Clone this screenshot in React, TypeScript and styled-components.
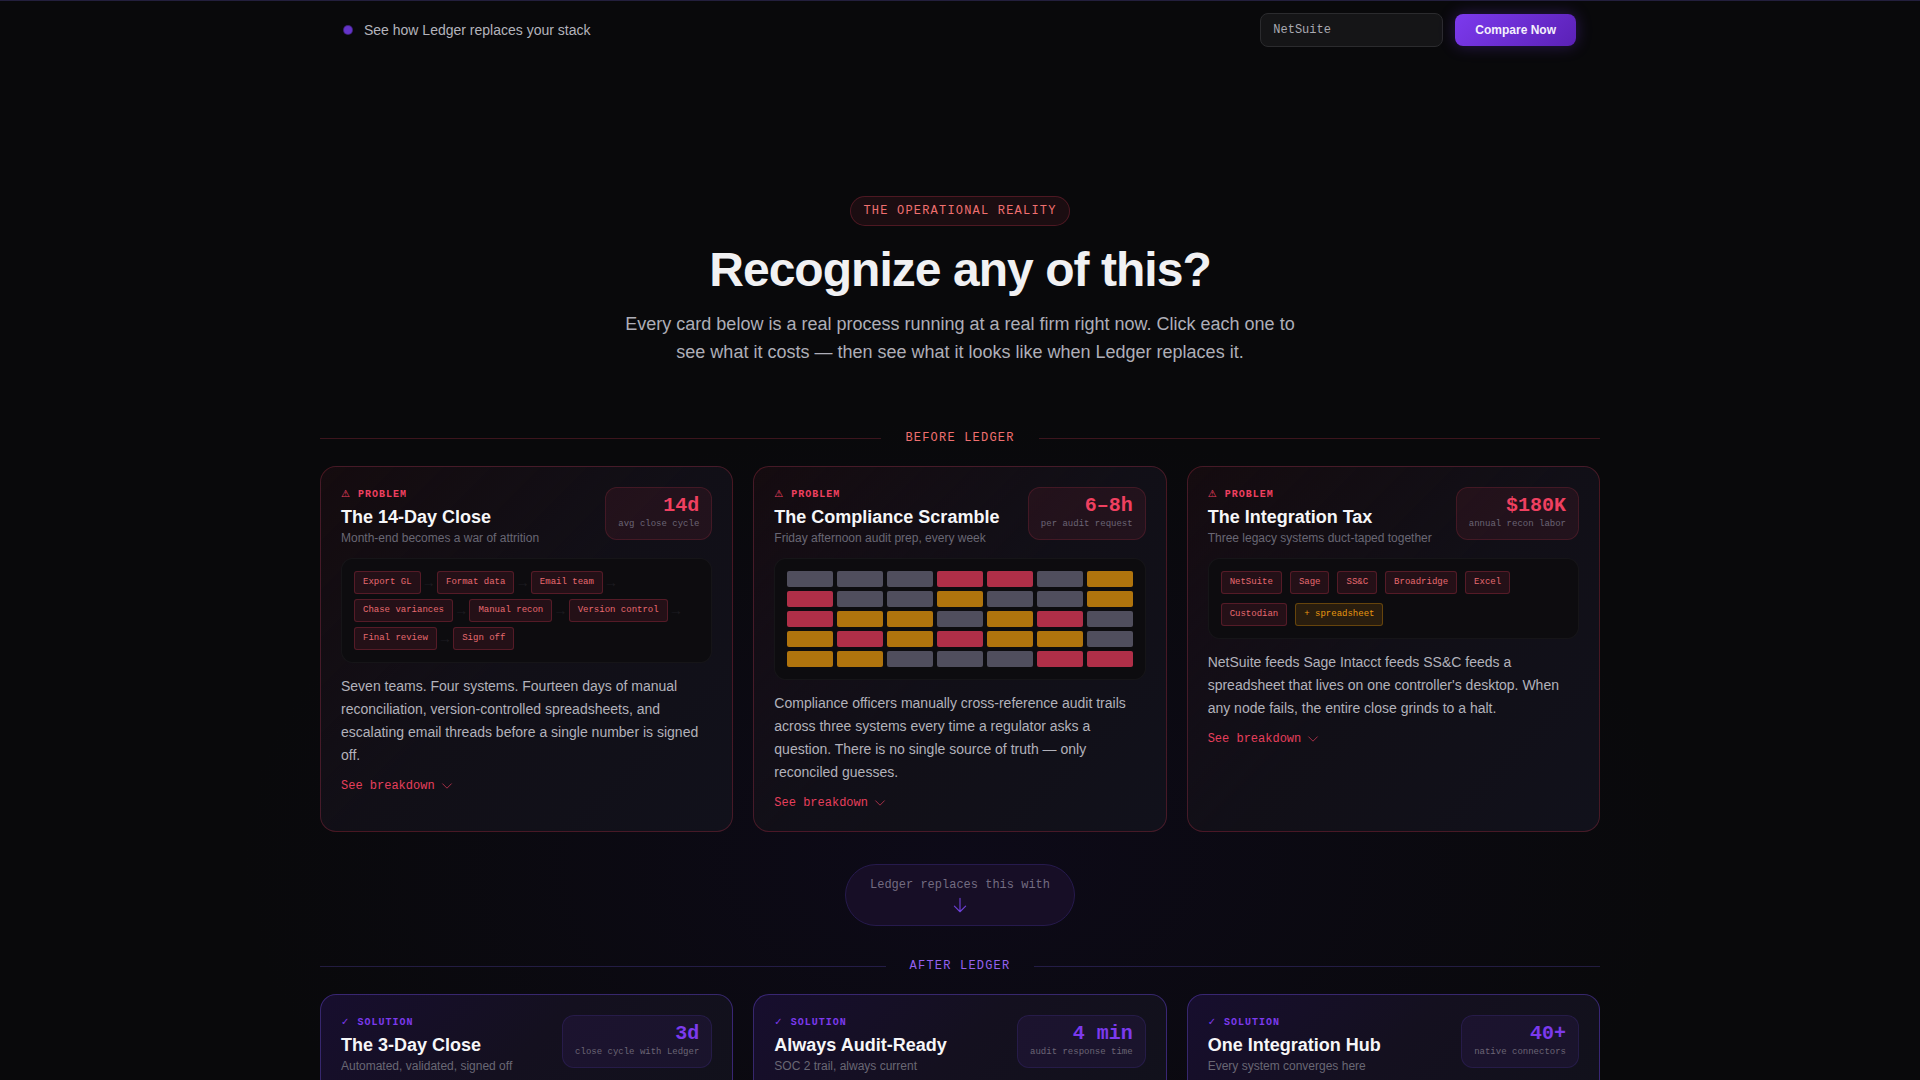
import React from 'react';
import styled, { createGlobalStyle, css } from 'styled-components';

const SANS = '"Liberation Sans", Arial, sans-serif';
const MONO = '"Liberation Mono", "Courier New", monospace';

type Tone = 'problem' | 'solution';

const tones = {
  problem: {
    accent: '#ef4060',
    border: 'rgba(244, 63, 94, 0.24)',
    rule: 'rgba(244, 63, 94, 0.22)',
    label: '#f07070',
    card: 'linear-gradient(135deg, rgba(244, 63, 94, 0.05) 0%, rgba(18, 16, 24, 0.95) 50%, #11111b 100%)',
    stat: 'rgba(244, 63, 94, 0.08)',
    statBorder: 'rgba(244, 63, 94, 0.16)',
  },
  solution: {
    accent: '#7c3aed',
    border: 'rgba(91, 61, 190, 0.5)',
    rule: 'rgba(99, 80, 200, 0.28)',
    label: '#9461f0',
    card: 'linear-gradient(135deg, #170e2e 0%, #14101f 50%, #11111b 100%)',
    stat: 'rgba(124, 58, 237, 0.08)',
    statBorder: 'rgba(99, 70, 220, 0.16)',
  },
};

const GlobalStyle = createGlobalStyle`
  *, *::before, *::after { box-sizing: border-box; }
  html { background: #09090b; }
  body {
    margin: 0;
    height: 100vh;
    overflow: hidden;
    background: #09090b;
    color: #f4f4f5;
    font-family: ${SANS};
  }
  h1, h2, h3, p { margin: 0; }
`;

const Page = styled.div`
  border-top: 1px solid #231f3d;
  background: radial-gradient(ellipse 720px 440px at 50% 860px, #0d0a18 0%, rgba(13, 10, 24, 0) 100%);
`;

const Container = styled.div`
  width: 100%;
  max-width: 1280px;
  margin: 0 auto;
`;

const Bar = styled(Container)`
  display: flex;
  align-items: center;
  justify-content: space-between;
  padding: 12px 24px;
`;

const BarNote = styled.p`
  display: flex;
  align-items: center;
  gap: 12px;
  font-size: 14px;
  line-height: 20px;
  color: #b4b4bc;
`;

const Dot = styled.span`
  width: 8px;
  height: 8px;
  border-radius: 50%;
  background: #6434c8;
  box-shadow: 0 0 0 1px rgba(100, 52, 200, 0.6);
`;

const CompareForm = styled.form`
  display: flex;
  align-items: center;
  gap: 12px;
`;

const ToolInput = styled.input`
  width: 183px;
  height: 34px;
  padding: 0 12px;
  border: 1px solid #2b2b2e;
  border-radius: 8px;
  background: #151517;
  color: #a9a9b1;
  font: 12px/18px ${MONO};
`;

const CompareButton = styled.button`
  height: 32px;
  padding: 0 20px;
  border: 0;
  border-radius: 8px;
  background: linear-gradient(135deg, #7c3aed, #5b21b6);
  box-shadow: 0 0 16px rgba(124, 58, 237, 0.3);
  color: #f4f0fc;
  font: bold 12px/18px ${SANS};
`;

const Hero = styled.header`
  display: flex;
  flex-direction: column;
  align-items: center;
  padding: 137px 24px 0;
  text-align: center;
`;

const Eyebrow = styled.p`
  padding: 6px 12px;
  border: 1px solid rgba(244, 63, 94, 0.24);
  border-radius: 16px;
  background: rgba(244, 63, 94, 0.08);
  color: #f07070;
  font: 12px/16px ${MONO};
  letter-spacing: 0.1em;
`;

const Title = styled.h1`
  margin-top: 16px;
  font-size: 48px;
  line-height: 56px;
  letter-spacing: -0.02em;
  color: #f1f1f3;
`;

const Lead = styled.p`
  max-width: 680px;
  margin-top: 12px;
  font-size: 18px;
  line-height: 28px;
  color: #aeaeb8;
`;

const Divider = styled.h2<{ $tone: Tone }>`
  display: flex;
  align-items: center;
  gap: 24px;
  margin: 0 0 18px;
  color: ${p => tones[p.$tone].label};
  font: 12px/20px ${MONO};
  letter-spacing: 0.1em;
  &::before, &::after {
    content: '';
    flex: 1;
    height: 1px;
    background: ${p => tones[p.$tone].rule};
  }
`;

const Stage = styled.section`
  padding-top: 62px;
`;

const AfterStage = styled.section`
  padding-top: 30px;
`;

const CardGrid = styled.div`
  display: grid;
  grid-template-columns: repeat(3, minmax(0, 1fr));
  gap: 20px;
`;

const Card = styled.article<{ $tone: Tone }>`
  padding: 20px;
  border: 1px solid ${p => tones[p.$tone].border};
  border-radius: 16px;
  background: ${p => tones[p.$tone].card};
`;

const CardHead = styled.div`
  display: flex;
  align-items: flex-start;
  justify-content: space-between;
  gap: 12px;
  margin-bottom: 12px;
`;

const Tag = styled.p<{ $tone: Tone }>`
  height: 15px;
  margin-bottom: 4px;
  color: ${p => tones[p.$tone].accent};
  font: bold 10px/13px ${MONO};
  letter-spacing: 0.1em;
`;

const TagMark = styled.span`
  font-family: "DejaVu Sans", sans-serif;
`;

const CardTitle = styled.h3`
  font-size: 18px;
  line-height: 22px;
  color: #f6f6f8;
`;

const CardSub = styled.p`
  margin-top: 2px;
  font-size: 12px;
  line-height: 16px;
  color: #696774;
`;

const Stat = styled.div<{ $tone: Tone }>`
  flex: none;
  padding: 7px 12px 8px;
  border: 1px solid ${p => tones[p.$tone].statBorder};
  border-radius: 12px;
  background: ${p => tones[p.$tone].stat};
  text-align: right;
  font-family: ${MONO};
`;

const StatValue = styled.p<{ $tone: Tone }>`
  font-size: 20px;
  font-weight: bold;
  line-height: 22px;
  color: ${p => tones[p.$tone].accent};
`;

const StatLabel = styled.p`
  font-size: 9px;
  line-height: 14px;
  color: #6b6575;
`;

const Visual = styled.div`
  margin-bottom: 12px;
  padding: 12px;
  border: 1px solid rgba(255, 255, 255, 0.04);
  border-radius: 12px;
  background: #0d0c0f;
`;

const ChipList = styled.ul<{ $gap: string }>`
  display: flex;
  flex-wrap: wrap;
  align-items: center;
  gap: ${p => p.$gap};
  margin: 0;
  padding: 0;
  list-style: none;
`;

const ChipItem = styled.li`
  display: flex;
  align-items: center;
  gap: 4px;
`;

const Chip = styled.span<{ $warn?: boolean }>`
  padding: 4px 8px;
  border: 1px solid rgba(244, 63, 94, 0.24);
  border-radius: 3px;
  background: rgba(244, 63, 94, 0.1);
  color: #e76a70;
  font: 9px/13px ${MONO};
  ${p => p.$warn && css`
    border-color: rgba(245, 158, 11, 0.3);
    background: rgba(245, 158, 11, 0.12);
    color: #e8980f;
  `}
`;

const ChipArrow = styled.span`
  color: #1d1c21;
  font: 14px/14px ${MONO};
`;

const HeatGrid = styled.div`
  display: grid;
  grid-template-columns: repeat(7, 1fr);
  grid-auto-rows: 16px;
  gap: 4px;
`;

const heatColors = { g: '#504e5d', r: '#b02f48', a: '#b0740d' };

const HeatCell = styled.span<{ $level: keyof typeof heatColors }>`
  border-radius: 2px;
  background: ${p => heatColors[p.$level]};
`;

const Body = styled.p`
  font-size: 14px;
  line-height: 23px;
  color: #b2b2bb;
`;

const MoreButton = styled.button`
  display: flex;
  align-items: center;
  gap: 5px;
  margin-top: 11px;
  padding: 0;
  border: 0;
  background: none;
  color: #e63f5c;
  font: 12px/16px ${MONO};
`;

const Bridge = styled.div`
  display: flex;
  flex-direction: column;
  align-items: center;
  gap: 4px;
  width: fit-content;
  margin: 32px auto 0;
  padding: 13px 24px 11px;
  border: 1px solid #261a4d;
  border-radius: 31px;
  background: #170e26;
  color: #736c81;
  font: 12px/14px ${MONO};
`;

const ChevronIcon = () => (
  <svg width="14" height="14" viewBox="0 0 24 24" fill="none" stroke="currentColor" strokeWidth="1.5" strokeLinecap="round" strokeLinejoin="round" opacity="0.8" aria-hidden="true">
    <path d="m19.5 8.25-7.5 7.5-7.5-7.5" />
  </svg>
);

const ArrowIcon = () => (
  <svg width="18" height="18" viewBox="0 0 24 24" fill="none" stroke="#6d3fd6" strokeWidth="1.5" strokeLinecap="round" strokeLinejoin="round" aria-hidden="true">
    <path d="M19.5 13.5 12 21m0 0-7.5-7.5M12 21V3" />
  </svg>
);

type HeadProps = { tone: Tone; title: string; sub: string; value: string; label: string };

const Head = ({ tone, title, sub, value, label }: HeadProps) => (
  <CardHead>
    <div>
      <Tag $tone={tone}>
        <TagMark>{tone === 'problem' ? '⚠' : '✓'}</TagMark>
        {tone === 'problem' ? ' PROBLEM' : ' SOLUTION'}
      </Tag>
      <CardTitle>{title}</CardTitle>
      <CardSub>{sub}</CardSub>
    </div>
    <Stat $tone={tone}>
      <StatValue $tone={tone}>{value}</StatValue>
      <StatLabel>{label}</StatLabel>
    </Stat>
  </CardHead>
);

const steps = ['Export GL', 'Format data', 'Email team', 'Chase variances', 'Manual recon', 'Version control', 'Final review', 'Sign off'];
const systems = ['NetSuite', 'Sage', 'SS&C', 'Broadridge', 'Excel', 'Custodian', '+ spreadsheet'];
const heat = 'gggrrga' + 'rggagga' + 'raagarg' + 'araraag' + 'aagggrr';

const problems = [
  {
    title: 'The 14-Day Close',
    sub: 'Month-end becomes a war of attrition',
    value: '14d',
    label: 'avg close cycle',
    body: 'Seven teams. Four systems. Fourteen days of manual reconciliation, version-controlled spreadsheets, and escalating email threads before a single number is signed off.',
    visual: (
      <ChipList $gap="5px 4px">
        {steps.map((step, i) => (
          <ChipItem key={step}>
            <Chip>{step}</Chip>
            {i < steps.length - 1 && <ChipArrow>→</ChipArrow>}
          </ChipItem>
        ))}
      </ChipList>
    ),
  },
  {
    title: 'The Compliance Scramble',
    sub: 'Friday afternoon audit prep, every week',
    value: '6–8h',
    label: 'per audit request',
    body: 'Compliance officers manually cross-reference audit trails across three systems every time a regulator asks a question. There is no single source of truth — only reconciled guesses.',
    visual: (
      <HeatGrid>
        {heat.split('').map((level, i) => (
          <HeatCell key={i} $level={level as keyof typeof heatColors} />
        ))}
      </HeatGrid>
    ),
  },
  {
    title: 'The Integration Tax',
    sub: 'Three legacy systems duct-taped together',
    value: '$180K',
    label: 'annual recon labor',
    body: "NetSuite feeds Sage Intacct feeds SS&C feeds a spreadsheet that lives on one controller's desktop. When any node fails, the entire close grinds to a halt.",
    visual: (
      <ChipList $gap="9px 8px">
        {systems.map(name => (
          <ChipItem key={name}>
            <Chip $warn={name.startsWith('+')}>{name}</Chip>
          </ChipItem>
        ))}
      </ChipList>
    ),
  },
];

const solutions = [
  { title: 'The 3-Day Close', sub: 'Automated, validated, signed off', value: '3d', label: 'close cycle with Ledger' },
  { title: 'Always Audit-Ready', sub: 'SOC 2 trail, always current', value: '4 min', label: 'audit response time' },
  { title: 'One Integration Hub', sub: 'Every system converges here', value: '40+', label: 'native connectors' },
];

export default function App() {
  return (
    <>
      <GlobalStyle />
      <Page>
        <Bar>
          <BarNote><Dot />See how Ledger replaces your stack</BarNote>
          <CompareForm onSubmit={e => e.preventDefault()}>
            <ToolInput type="text" aria-label="Current system" defaultValue="NetSuite" />
            <CompareButton type="submit">Compare Now</CompareButton>
          </CompareForm>
        </Bar>
        <Hero>
          <Eyebrow>THE OPERATIONAL REALITY</Eyebrow>
          <Title>Recognize any of this?</Title>
          <Lead>
            Every card below is a real process running at a real firm right now. Click each one to see what it costs — then see what it looks like when Ledger replaces it.
          </Lead>
        </Hero>
        <Container>
          <Stage>
            <Divider $tone="problem">BEFORE LEDGER</Divider>
            <CardGrid>
              {problems.map(p => (
                <Card key={p.title} $tone="problem">
                  <Head tone="problem" title={p.title} sub={p.sub} value={p.value} label={p.label} />
                  <Visual>{p.visual}</Visual>
                  <Body>{p.body}</Body>
                  <MoreButton type="button">See breakdown<ChevronIcon /></MoreButton>
                </Card>
              ))}
            </CardGrid>
          </Stage>
          <Bridge>Ledger replaces this with<ArrowIcon /></Bridge>
          <AfterStage>
            <Divider $tone="solution">AFTER LEDGER</Divider>
            <CardGrid>
              {solutions.map(s => (
                <Card key={s.title} $tone="solution">
                  <Head tone="solution" {...s} />
                </Card>
              ))}
            </CardGrid>
          </AfterStage>
        </Container>
      </Page>
    </>
  );
}
